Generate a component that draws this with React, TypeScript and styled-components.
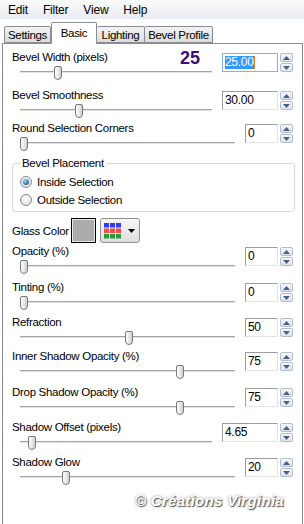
import React from 'react';
import styled, { createGlobalStyle } from 'styled-components';

const GlobalStyle = createGlobalStyle`
  html, body {
    margin: 0;
    padding: 0;
    background: #ffffff;
  }
  body {
    font-family: "Liberation Sans", Arial, sans-serif;
    font-size: 11.5px;
    letter-spacing: -0.3px;
    color: #000;
  }
  * {
    box-sizing: border-box;
  }
`;

type RowData = {
  label: string;
  value: string;
  wide?: boolean;
  thumb: number;
  mt: number;
  big?: string;
  focused?: boolean;
};

const topRows: RowData[] = [
  { label: 'Bevel Width (pixels)', value: '25.00', wide: true, thumb: 34, mt: 6, big: '25', focused: true },
  { label: 'Bevel Smoothness', value: '30.00', wide: true, thumb: 55, mt: 8 },
  { label: 'Round Selection Corners', value: '0', thumb: 0, mt: 3 },
];

const bottomRows: RowData[] = [
  { label: 'Opacity (%)', value: '0', thumb: 0, mt: 1 },
  { label: 'Tinting (%)', value: '0', thumb: 0, mt: 6 },
  { label: 'Refraction', value: '50', thumb: 105, mt: 5 },
  { label: 'Inner Shadow Opacity (%)', value: '75', thumb: 156, mt: 4 },
  { label: 'Drop Shadow Opacity (%)', value: '75', thumb: 156, mt: 6 },
  { label: 'Shadow Offset (pixels)', value: '4.65', wide: true, thumb: 8, mt: 5 },
  { label: 'Shadow Glow', value: '20', thumb: 42, mt: 5 },
];

const tabs = [
  { name: 'Settings', width: 47 },
  { name: 'Basic', width: 46, active: true },
  { name: 'Lighting', width: 48 },
  { name: 'Bevel Profile', width: 68 },
];

const Arrow = ({ up }: { up?: boolean }) => (
  <svg width="7" height="4" viewBox="0 0 7 4">
    <path d={up ? 'M0 4 L3.5 0 L7 4 Z' : 'M0 0 L7 0 L3.5 4 Z'} fill="#4a5f86" />
  </svg>
);

const SliderRow = ({ row }: { row: RowData }) => (
  <Row $mt={row.mt}>
    <Left>
      <LabelLine>
        <span>{row.label}</span>
        {row.big && <Big>{row.big}</Big>}
      </LabelLine>
      <Slider>
        <Thumb style={{ left: row.thumb }} />
      </Slider>
    </Left>
    <Spin>
      <SpinBox $wide={row.wide} $focused={row.focused}>
        {row.focused ? (
          <>
            <Selected>{row.value}</Selected>
            <Caret />
          </>
        ) : (
          row.value
        )}
      </SpinBox>
      <Spinner>
        <SpinBtn>
          <Arrow up />
        </SpinBtn>
        <SpinBtn>
          <Arrow />
        </SpinBtn>
      </Spinner>
    </Spin>
  </Row>
);

const PaletteIcon = () => (
  <svg width="18" height="16" viewBox="0 0 18 16">
    {[0, 1, 2].map((r) =>
      [0, 1, 2].map((c) => (
        <rect
          key={`${r}-${c}`}
          x={c * 6}
          y={r * 5.5}
          width="5"
          height="4.5"
          fill={['#2f3cf2', '#f24a4a', '#2e9a3c'][r]}
        />
      ))
    )}
  </svg>
);

const App = () => (
  <>
    <GlobalStyle />
    <Screen>
      <MenuBar>
        {['Edit', 'Filter', 'View', 'Help'].map((m) => (
          <MenuItem key={m}>{m}</MenuItem>
        ))}
      </MenuBar>

      <TabRow>
        {tabs.map((t) => (
          <Tab key={t.name} $active={t.active} $width={t.width}>
            {t.name}
          </Tab>
        ))}
      </TabRow>

      <Panel>
        {topRows.map((r) => (
          <SliderRow key={r.label} row={r} />
        ))}

        <Group>
          <Legend>Bevel Placement</Legend>
          <Radio>
            <RadioDot $checked />
            Inside Selection
          </Radio>
          <Radio>
            <RadioDot />
            Outside Selection
          </Radio>
        </Group>

        <ColorRow>
          <ColorLabel>Glass Color</ColorLabel>
          <Swatch />
          <PaletteButton>
            <PaletteIcon />
            <svg width="7" height="4" viewBox="0 0 7 4">
              <path d="M0 0 L7 0 L3.5 4 Z" fill="#000" />
            </svg>
          </PaletteButton>
        </ColorRow>

        {bottomRows.map((r) => (
          <SliderRow key={r.label} row={r} />
        ))}

        <Watermark>© Créations Virginia</Watermark>
      </Panel>
    </Screen>
  </>
);

const Screen = styled.div`
  width: 304px;
  height: 524px;
  overflow: hidden;
  display: flex;
  flex-direction: column;
  background: #fff;
`;

const MenuBar = styled.div`
  height: 19px;
  display: flex;
  align-items: center;
  gap: 15px;
  padding: 1px 0 0 8px;
  background: linear-gradient(#fafbfc, #e8ebf0);
  font-size: 12px;
  letter-spacing: -0.2px;
`;

const MenuItem = styled.span`
  line-height: 18px;
`;

const TabRow = styled.div`
  margin-top: 3px;
  height: 21px;
  display: flex;
  align-items: flex-end;
  padding-left: 4px;
`;

const Tab = styled.div<{ $active?: boolean; $width: number }>`
  width: ${(p) => p.$width}px;
  height: ${(p) => (p.$active ? 22 : 17)}px;
  margin-bottom: ${(p) => (p.$active ? -1 : 0)}px;
  position: relative;
  z-index: ${(p) => (p.$active ? 1 : 0)};
  display: flex;
  align-items: center;
  justify-content: center;
  border: 1px solid #898c95;
  border-bottom: ${(p) => (p.$active ? 'none' : '1px solid #898c95')};
  border-left: ${(p) => (p.$active ? '1px solid #898c95' : 'none')};
  border-radius: 2px 2px 0 0;
  background: ${(p) => (p.$active ? '#ffffff' : 'linear-gradient(#f3f3f3, #dcdcdc)')};
  padding-bottom: ${(p) => (p.$active ? 1 : 0)}px;

  &:first-child {
    border-left: 1px solid #898c95;
  }
`;

const Panel = styled.div`
  margin-left: 2px;
  width: 301px;
  flex: 1;
  border: 1px solid #898c95;
  border-bottom: none;
  background: #fff;
  padding: 0 9px 0 9px;
  display: flex;
  flex-direction: column;
`;

const Row = styled.div<{ $mt: number }>`
  display: flex;
  height: 30px;
  margin-top: ${(p) => p.$mt}px;
`;

const Left = styled.div`
  flex: 1;
  min-width: 0;
  display: flex;
  flex-direction: column;
`;

const LabelLine = styled.div`
  height: 14px;
  display: flex;
  align-items: center;
  justify-content: space-between;
  padding-right: 22px;
  white-space: nowrap;
`;

const Big = styled.span`
  font-size: 18px;
  font-weight: bold;
  letter-spacing: 0;
  color: #3d1079;
  line-height: 14px;
  margin-top: 1px;
`;

const Slider = styled.div`
  position: relative;
  height: 16px;
  margin: 0 10px 0 8px;

  &::before {
    content: '';
    position: absolute;
    left: 0;
    right: 0;
    top: 7px;
    height: 1px;
    background: #a4a4a4;
    box-shadow: 0 1px 0 #e2e2e2;
  }
`;

const Thumb = styled.div`
  position: absolute;
  top: 2px;
  width: 8px;
  height: 14px;
  border: 1px solid #777;
  border-radius: 2px 2px 4px 4px;
  background: linear-gradient(to right, #ffffff, #e4e4e4 60%, #cfcfcf);
`;

const Spin = styled.div`
  display: flex;
  gap: 2px;
  margin-top: 3px;
  height: 19px;
`;

const SpinBox = styled.div<{ $wide?: boolean; $focused?: boolean }>`
  width: ${(p) => (p.$wide ? 56 : 33)}px;
  height: 19px;
  border: 1px solid ${(p) => (p.$focused ? '#7eb4ea' : '#9a9ca2')};
  border-right-color: ${(p) => (p.$focused ? '#7eb4ea' : '#dfe3e8')};
  border-bottom-color: ${(p) => (p.$focused ? '#7eb4ea' : '#dfe3e8')};
  padding-left: 2px;
  font-size: 12px;
  line-height: 17px;
  display: flex;
  align-items: center;
  background: #fff;
`;

const Selected = styled.span`
  background: #3399ff;
  color: #fff;
  line-height: 13px;
`;

const Caret = styled.span`
  width: 1px;
  height: 13px;
  background: #e27a18;
`;

const Spinner = styled.div`
  width: 13px;
  display: flex;
  flex-direction: column;
  gap: 1px;
`;

const SpinBtn = styled.div`
  flex: 1;
  display: flex;
  align-items: center;
  justify-content: center;
  border: 1px solid #b5bccb;
  border-radius: 2px;
  background: linear-gradient(#f6f8fb, #dce3ec);
`;

const Group = styled.fieldset`
  margin: 5px -2px 0 0;
  padding: 0 0 2px 7px;
  border: 1px solid #d3dbe2;
  border-radius: 3px;
`;

const Legend = styled.legend`
  padding: 0 2px;
  line-height: 14px;
`;

const Radio = styled.div`
  height: 18px;
  display: flex;
  align-items: center;
  gap: 5px;

  &:first-of-type {
    margin-top: 3px;
  }
`;

const RadioDot = styled.span<{ $checked?: boolean }>`
  width: 12px;
  height: 12px;
  border-radius: 50%;
  border: 1px solid #8a8c90;
  background: radial-gradient(circle at 50% 40%, #ffffff, #d6d6d6);
  display: flex;
  align-items: center;
  justify-content: center;

  &::after {
    content: '';
    display: ${(p) => (p.$checked ? 'block' : 'none')};
    width: 6px;
    height: 6px;
    border-radius: 50%;
    background: radial-gradient(circle at 40% 35%, #9ad8fb, #1c5f96 75%);
  }
`;

const ColorRow = styled.div`
  margin-top: 6px;
  height: 25px;
  display: flex;
  align-items: center;
`;

const ColorLabel = styled.span`
  width: 59px;
  margin-top: 1px;
`;

const Swatch = styled.div`
  width: 25px;
  height: 25px;
  border: 1px solid #000;
  box-shadow: inset 0 0 0 1px #e8e8e8;
  background: #ababab;
`;

const PaletteButton = styled.div`
  margin-left: 4px;
  width: 40px;
  height: 25px;
  border: 1px solid #8f8f8f;
  border-radius: 3px;
  background: linear-gradient(#f7f7f7, #dedede);
  display: flex;
  align-items: center;
  gap: 6px;
  padding-left: 3px;
`;

const Watermark = styled.div`
  margin-top: 7px;
  padding-right: 9px;
  text-align: right;
  font-size: 15px;
  font-weight: bold;
  font-style: italic;
  letter-spacing: 0.3px;
  line-height: 18px;
  color: #ffffff;
  text-shadow: 1px 1px 1px #555, 0 0 3px #888;
`;

export default App;
